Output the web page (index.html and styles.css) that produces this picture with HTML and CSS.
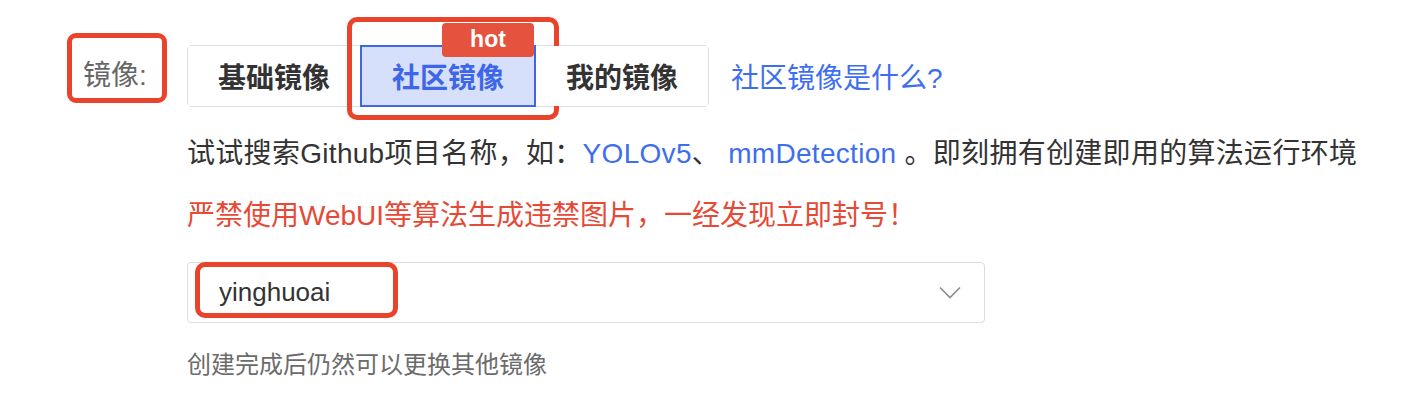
FILE: index.html
```html
<!DOCTYPE html>
<html lang="zh-CN">
<head>
  <meta charset="UTF-8">
  <title>镜像</title>
  <meta name="viewport" content="width=device-width, initial-scale=1.0">
  <link rel="stylesheet" href="styles.css">
</head>
<body>
  <div class="form">
    <div class="form-item">
      <div class="form-label">
        镜像:
        <span class="mark mark-label"></span>
      </div>

      <div class="form-content">
        <div class="tabs-row">
          <div class="tabs">
            <button class="tab">基础镜像</button>
            <button class="tab active">
              社区镜像
              <span class="hot">hot</span>
              <span class="mark mark-tab"></span>
            </button>
            <button class="tab">我的镜像</button>
          </div>
          <a class="help-link" href="#">社区镜像是什么?</a>
        </div>

        <p class="tip">试试搜索Github项目名称，如：<a href="#">YOLOv5</a>、 <a href="#">mmDetection</a> 。即刻拥有创建即用的算法运行环境</p>
        <p class="warn">严禁使用WebUI等算法生成违禁图片，一经发现立即封号！</p>

        <div class="select">
          <span class="select-value">yinghuoai</span>
          <svg class="arrow" width="22" height="13" viewBox="0 0 22 13">
            <path d="M1 1.5 L11 11.5 L21 1.5" fill="none" stroke="#8c8c8c" stroke-width="1.6"/>
          </svg>
          <span class="mark mark-select"></span>
        </div>

        <p class="hint">创建完成后仍然可以更换其他镜像</p>
      </div>
    </div>
  </div>
</body>
</html>
```

FILE: styles.css
```css
body {
  margin: 0;
  background: #fff;
  font-family: "Liberation Sans", "Noto Sans CJK SC", sans-serif;
  color: #333;
}
.form {
  padding: 45px 0 0 83px;
}
.form-item {
  display: flex;
}
.form-label {
  position: relative;
  width: 104px;
  height: 62px;
  line-height: 62px;
  font-size: 28px;
  color: #666;
  flex: none;
}
.form-content {
  flex: 1;
}
.tabs-row {
  display: flex;
  align-items: center;
  height: 62px;
}
.tabs {
  display: flex;
  border: 1px solid #dcdde2;
  border-radius: 4px;
  height: 60px;
}
.tab {
  position: relative;
  width: 172px;
  height: 60px;
  padding: 0;
  border: none;
  background: #fff;
  font-family: inherit;
  font-size: 28px;
  font-weight: bold;
  color: #333;
}
.tab.active {
  width: 176px;
  height: 62px;
  margin: -1px 0;
  border: 2px solid #3d67e8;
  background: #d7e0fb;
  color: #3d67e8;
}
.hot {
  position: absolute;
  top: -24px;
  right: 0;
  width: 92px;
  height: 34px;
  line-height: 33px;
  border-radius: 4px;
  background: #e5523d;
  color: #fff;
  font-size: 23px;
  font-weight: bold;
  text-align: center;
}
.help-link {
  margin-left: 22px;
  font-size: 28px;
  color: #3e6ef0;
  text-decoration: none;
}
.tip, .warn {
  margin: 0;
  font-size: 28px;
  line-height: 40px;
  white-space: nowrap;
}
.tip {
  margin-top: 27px;
  letter-spacing: 0.3px;
}
.tip a {
  color: #3e6ef0;
  text-decoration: none;
}
.warn {
  margin-top: 22px;
  color: #e64a36;
}
.select {
  position: relative;
  display: flex;
  align-items: center;
  justify-content: space-between;
  box-sizing: border-box;
  width: 798px;
  height: 61px;
  margin-top: 26px;
  padding: 0 23px 0 31px;
  border: 1px solid #dcdde2;
  border-radius: 4px;
  font-size: 26px;
  color: #333;
}
.hint {
  margin: 24px 0 0;
  font-size: 24px;
  line-height: 36px;
  color: #6b6b6b;
}

/* red annotation frames */
.mark {
  position: absolute;
  box-sizing: border-box;
  border: 5px solid #ea432c;
  border-radius: 10px;
  pointer-events: none;
}
.mark-label {
  left: -16px;
  top: -12px;
  width: 100px;
  height: 70px;
  border-radius: 9px;
}
.mark-tab {
  left: -15px;
  top: -30px;
  width: 212px;
  height: 103px;
}
.mark-select {
  left: 7px;
  top: -1px;
  width: 203px;
  height: 56px;
}
```
